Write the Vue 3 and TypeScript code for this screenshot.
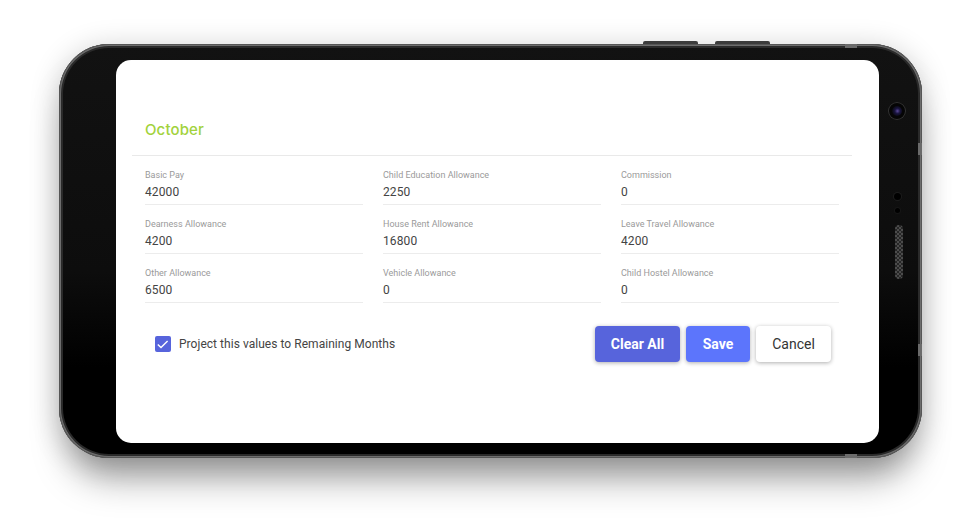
<script setup lang="ts">
interface Field { label: string; value: string }
const fields: Field[] = [
  { label: 'Basic Pay', value: '42000' },
  { label: 'Child Education Allowance', value: '2250' },
  { label: 'Commission', value: '0' },
  { label: 'Dearness Allowance', value: '4200' },
  { label: 'House Rent Allowance', value: '16800' },
  { label: 'Leave Travel Allowance', value: '4200' },
  { label: 'Other Allowance', value: '6500' },
  { label: 'Vehicle Allowance', value: '0' },
  { label: 'Child Hostel Allowance', value: '0' },
]
</script>

<template>
  <div class="page">
    <div class="phone">
      <span class="side-btn btn-a"></span>
      <span class="side-btn btn-b"></span>
      <span class="band band-top"></span>
      <span class="band band-bottom"></span>
      <span class="band-v band-r1"></span>
      <span class="band-v band-r2"></span>
      <main class="screen">
        <h1 class="title">October</h1>
        <div class="divider"></div>
        <div class="grid">
          <div v-for="f in fields" :key="f.label" class="field">
            <div class="label">{{ f.label }}</div>
            <div class="value">{{ f.value }}</div>
          </div>
        </div>
        <div class="footer">
          <label class="check">
            <span class="box">
              <svg width="16" height="16" viewBox="0 0 16 16"><path d="M2.8 8.4 6 11.6 12.6 5" fill="none" stroke="#fff" stroke-width="1.4"/></svg>
            </span>
            <span class="check-text">Project this values to Remaining Months</span>
          </label>
          <div class="actions">
            <button class="btn clear">Clear All</button>
            <button class="btn save">Save</button>
            <button class="btn cancel">Cancel</button>
          </div>
        </div>
      </main>
      <aside class="sensors">
        <span class="camera"><span class="lens"></span></span>
        <span class="dot dot-1"></span>
        <span class="dot dot-2"></span>
        <span class="speaker"></span>
      </aside>
    </div>
  </div>
</template>

<style>
html, body { margin: 0; background: #fff; }
</style>

<style scoped>
.page {
  width: 980px;
  height: 525px;
  padding: 44px 0 0 59px;
  box-sizing: border-box;
  overflow: hidden;
  background: #fff;
  font-family: Roboto, "Liberation Sans", sans-serif;
}
.phone {
  position: relative;
  width: 863px;
  height: 414px;
  box-sizing: border-box;
  padding: 16px 43px 15px 57px;
  display: flex;
  border-radius: 50px;
  background: linear-gradient(#121212 0, #0d0d0d 55%, #000 78%);
  box-shadow:
    inset 0 0 0 1px #565656,
    inset 0 0 0 2px #6e6e6e,
    inset 0 0 0 4px #2a2a2a,
    0 30px 36px -10px rgba(0, 0, 0, .36),
    0 4px 30px rgba(0, 0, 0, .2);
}
.screen {
  flex: 1;
  background: #fff;
  border-radius: 15px;
  padding: 61px 27px 0 16px;
  box-sizing: border-box;
  min-width: 0;
}
.title {
  margin: 0 0 17px 13px;
  font: 500 15px/17px Inter, Lato, sans-serif;
  letter-spacing: .12px;
  color: #a2d23c;
}
.divider { height: 1px; background: #e9e9e9; }
.grid {
  display: grid;
  grid-template-columns: repeat(3, 218px);
  column-gap: 20px;
  padding: 13px 0 0 13px;
}
.field {
  height: 35px;
  margin-bottom: 13px;
  border-bottom: 1px solid #ececec;
}
.label {
  font-size: 9px;
  line-height: 12px;
  color: #9a9a9a;
}
.value {
  margin-top: 3px;
  font-size: 12px;
  line-height: 17px;
  color: #444;
  letter-spacing: .1px;
}
.footer {
  display: flex;
  align-items: center;
  justify-content: space-between;
  padding: 10px 21px 0 23px;
}
.check { display: flex; align-items: center; gap: 8px; }
.box {
  width: 16px;
  height: 16px;
  border-radius: 2px;
  background: #5764dc;
  display: flex;
}
.check-text {
  font-size: 12px;
  color: #444;
  letter-spacing: .04px;
}
.actions { display: flex; gap: 6px; }
.btn {
  height: 36px;
  border: 0;
  border-radius: 4px;
  padding: 0;
  font: 500 14px Roboto, sans-serif;
  box-shadow: 0 1px 4px rgba(0, 0, 0, .32);
}
.clear { width: 85px; background: #5764dc; color: #fff; font-weight: 700; }
.save { width: 64px; background: #5c75fc; color: #fff; font-weight: 700; }
.cancel { width: 75px; background: #fff; color: #333; font-weight: 400; }
.sensors { position: absolute; inset: 0; pointer-events: none; }
.sensors > * { position: absolute; }
.camera {
  left: 829px;
  top: 58px;
  width: 18px;
  height: 18px;
  border-radius: 50%;
  background: #050505;
  box-shadow: inset 0 0 0 1px #333;
  display: flex;
  align-items: center;
  justify-content: center;
}
.lens {
  width: 10px;
  height: 10px;
  border-radius: 50%;
  background: radial-gradient(circle at 55% 50%, #5a4a9a 0, #1a1540 35%, #08080f 75%);
}
.dot { border-radius: 50%; background: #000; }
.dot-1 { left: 835px; top: 149px; width: 7px; height: 7px; box-shadow: 0 0 0 1px #1c1c1c; }
.dot-2 { left: 836px; top: 164px; width: 5px; height: 5px; box-shadow: 0 0 0 1px #161616; }
.speaker {
  left: 836px;
  top: 181px;
  width: 8px;
  height: 54px;
  border-radius: 4px;
  background-color: #2d2d2d;
  background-image: repeating-conic-gradient(#4c4c4c 0 25%, #262626 0 50%);
  background-size: 4px 4px;
}
.side-btn {
  position: absolute;
  top: -3px;
  height: 3px;
  border-radius: 2px 2px 0 0;
  background: #3c3c3c;
}
.btn-a { left: 584px; width: 55px; }
.btn-b { left: 656px; width: 55px; }
.band {
  position: absolute;
  left: 786px;
  width: 12px;
  height: 4px;
  background: #6b6b6b;
}
.band-top { top: 0; }
.band-bottom { bottom: 0; }
.band-v {
  position: absolute;
  right: 0;
  width: 4px;
  height: 12px;
  background: #6b6b6b;
}
.band-r1 { top: 99px; }
.band-r2 { top: 300px; }
</style>
